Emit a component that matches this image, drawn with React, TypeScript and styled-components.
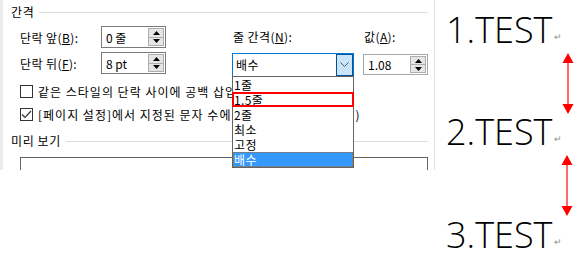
import styled, { createGlobalStyle } from "styled-components";

const GlobalStyle = createGlobalStyle`
  body {
    margin: 0;
    background: #ffffff;
  }
  * {
    box-sizing: border-box;
  }
`;

const Page = styled.div`
  display: flex;
  align-items: flex-start;
  width: 583px;
  height: 274px;
  overflow: hidden;
  background: #ffffff;
`;

const Dialog = styled.div`
  width: 435px;
  height: 170px;
  flex-shrink: 0;
  overflow: hidden;
  padding: 4px 6px 0 8px;
  background: #ffffff;
  border-left: 3px solid #ececec;
  border-right: 1px solid #e4e4e4;
  font-family: "Noto Sans CJK KR", "Noto Sans", sans-serif;
  font-size: 12px;
  color: #000000;
`;

const SectionHead = styled.div<{ $top?: number }>`
  display: flex;
  align-items: center;
  gap: 5px;
  height: 16px;
  margin-top: ${(p) => p.$top ?? 0}px;
  line-height: 16px;
  letter-spacing: 0.6px;
  &::after {
    content: "";
    flex: 1;
    height: 1px;
    background: #dcdcdc;
  }
`;

const Fields = styled.div`
  display: flex;
  align-items: flex-start;
  margin: 6px 0 0 9px;
`;

const LeftGroup = styled.div`
  display: flex;
  flex-direction: column;
  gap: 4px;
  width: 146px;
`;

const FieldRow = styled.div`
  display: flex;
  align-items: center;
  height: 22px;
`;

const Label = styled.span`
  width: 81px;
  white-space: nowrap;
  letter-spacing: 0.4px;
  u {
    text-decoration: underline;
    text-underline-offset: 1px;
  }
`;

const StackGroup = styled.div<{ $left: number; $gap: number; $raised?: boolean }>`
  position: relative;
  z-index: ${(p) => (p.$raised ? 5 : "auto")};
  display: flex;
  flex-direction: column;
  gap: ${(p) => p.$gap}px;
  margin-left: ${(p) => p.$left}px;
`;

const TopLabel = styled.div`
  height: 22px;
  line-height: 22px;
  padding-left: 1px;
  white-space: nowrap;
  letter-spacing: 0.4px;
  u {
    text-decoration: underline;
    text-underline-offset: 1px;
  }
`;

const SpinBox = styled.div<{ $border: string; $height: number }>`
  display: flex;
  align-items: center;
  justify-content: space-between;
  width: 65px;
  height: ${(p) => p.$height}px;
  padding: 1px 1px 1px 4px;
  border: 1px solid ${(p) => p.$border};
  background: #ffffff;
`;

const SpinValue = styled.span`
  font-family: "Noto Sans CJK KR", "Noto Sans", sans-serif;
  font-size: 12px;
`;

const Spinner = styled.div`
  display: flex;
  flex-direction: column;
  width: 16px;
  height: 100%;
`;

const SpinButton = styled.div`
  flex: 1;
  display: flex;
  align-items: center;
  justify-content: center;
  background: #e5e5e5;
  border: 1px solid #adadad;
  & + & {
    border-top: none;
  }
`;

const Combo = styled.div`
  position: relative;
  display: flex;
  align-items: stretch;
  width: 122px;
  height: 24px;
  border: 1px solid #0078d7;
  background: #ffffff;
`;

const ComboText = styled.span`
  flex: 1;
  padding-left: 3px;
  line-height: 22px;
  letter-spacing: 0.4px;
`;

const ComboButton = styled.div`
  display: flex;
  align-items: center;
  justify-content: center;
  width: 17px;
  background: #cce4f7;
  border: 1px solid #005499;
`;

const DropList = styled.div`
  position: absolute;
  top: 22px;
  left: -1px;
  width: 122px;
  border: 1px solid #646464;
  background: #ffffff;
  z-index: 6;
`;

const DropItem = styled.div<{ $selected?: boolean; $marked?: boolean }>`
  position: relative;
  height: 15px;
  line-height: 15px;
  padding-left: 1px;
  letter-spacing: 0.4px;
  background: ${(p) => (p.$selected ? "#3399ff" : "#ffffff")};
  color: ${(p) => (p.$selected ? "#ffffff" : "#000000")};
  outline: ${(p) => (p.$selected ? "1px dotted #b06a20" : "none")};
  outline-offset: -1px;
  &::after {
    content: "";
    display: ${(p) => (p.$marked ? "block" : "none")};
    position: absolute;
    inset: 0 -1px 0 -1px;
    border: 2px solid #ff0000;
  }
`;

const CheckRow = styled.div<{ $top: number }>`
  display: flex;
  align-items: center;
  gap: 5px;
  height: 16px;
  margin: ${(p) => p.$top}px 0 0 9px;
  white-space: nowrap;
  letter-spacing: 1px;
`;

const CheckBox = styled.span`
  display: flex;
  align-items: center;
  justify-content: center;
  width: 13px;
  height: 13px;
  flex-shrink: 0;
  border: 1px solid #333333;
  background: #ffffff;
`;

const Preview = styled.div`
  height: 40px;
  margin: 8px 0 0 9px;
  padding: 10px 0 0 31px;
  border: 1px solid #646464;
  font-size: 7px;
  letter-spacing: 0.5px;
  color: #c8c8c8;
  white-space: nowrap;
  overflow: hidden;
`;

const Document = styled.div`
  position: relative;
  flex: 1;
  height: 274px;
  padding: 4.5px 0 0 11px;
  font-family: "Open Sans", "Noto Sans", sans-serif;
  font-weight: 300;
  color: #000000;
`;

const Para = styled.div`
  height: 49px;
  margin-bottom: 53.5px;
  font-size: 36px;
  line-height: 49px;
  white-space: nowrap;
`;

const Mark = styled.span`
  margin-left: 2px;
  font-family: "DejaVu Sans", sans-serif;
  font-size: 9px;
  color: #8c8c8c;
  vertical-align: 3px;
`;

const Arrow = styled.svg<{ $top: number; $left: number }>`
  position: absolute;
  top: ${(p) => p.$top}px;
  left: ${(p) => p.$left}px;
`;

function SpinArrows() {
  return (
    <Spinner>
      <SpinButton>
        <svg width="7" height="4" viewBox="0 0 7 4">
          <polygon points="0,4 7,4 3.5,0" fill="#000" />
        </svg>
      </SpinButton>
      <SpinButton>
        <svg width="7" height="4" viewBox="0 0 7 4">
          <polygon points="0,0 7,0 3.5,4" fill="#000" />
        </svg>
      </SpinButton>
    </Spinner>
  );
}

function RedArrow({ top, left }: { top: number; left: number }) {
  return (
    <Arrow $top={top} $left={left} width="12" height="61" viewBox="0 0 12 61">
      <line x1="6" y1="8" x2="6" y2="53" stroke="#ff6b6b" strokeWidth="2" />
      <polygon points="6,0 11.5,10 0.5,10" fill="#ff0000" />
      <polygon points="6,61 11.5,51 0.5,51" fill="#ff0000" />
    </Arrow>
  );
}

const options = ["1줄", "1.5줄", "2줄", "최소", "고정", "배수"];

export default function App() {
  return (
    <>
      <GlobalStyle />
      <Page>
        <Dialog>
          <SectionHead>간격</SectionHead>
          <Fields>
            <LeftGroup>
              <FieldRow>
                <Label>
                  단락 앞(<u>B</u>):
                </Label>
                <SpinBox $border="#7a7a7a" $height={22}>
                  <SpinValue>0 줄</SpinValue>
                  <SpinArrows />
                </SpinBox>
              </FieldRow>
              <FieldRow>
                <Label>
                  단락 뒤(<u>F</u>):
                </Label>
                <SpinBox $border="#7a7a7a" $height={22}>
                  <SpinValue>8 pt</SpinValue>
                  <SpinArrows />
                </SpinBox>
              </FieldRow>
            </LeftGroup>
            <StackGroup $left={66} $gap={5} $raised>
              <TopLabel>
                줄 간격(<u>N</u>):
              </TopLabel>
              <Combo>
                <ComboText>배수</ComboText>
                <ComboButton>
                  <svg width="9" height="6" viewBox="0 0 9 6">
                    <polyline
                      points="0.5,0.5 4.5,4.5 8.5,0.5"
                      fill="none"
                      stroke="#4a5a6a"
                      strokeWidth="1"
                    />
                  </svg>
                </ComboButton>
                <DropList>
                  {options.map((o) => (
                    <DropItem
                      key={o}
                      $marked={o === "1.5줄"}
                      $selected={o === "배수"}
                    >
                      {o}
                    </DropItem>
                  ))}
                </DropList>
              </Combo>
            </StackGroup>
            <StackGroup $left={9} $gap={6}>
              <TopLabel>
                값(<u>A</u>):
              </TopLabel>
              <SpinBox $border="#a8a8a8" $height={21}>
                <SpinValue>1.08</SpinValue>
                <SpinArrows />
              </SpinBox>
            </StackGroup>
          </Fields>
          <CheckRow $top={6}>
            <CheckBox />
            같은 스타일의 단락 사이에 공백 삽입 안 함(C)
          </CheckRow>
          <CheckRow $top={7}>
            <CheckBox>
              <svg width="11" height="9" viewBox="0 0 11 9">
                <polyline
                  points="1,4.5 4,7.5 10,1"
                  fill="none"
                  stroke="#333"
                  strokeWidth="1.2"
                />
              </svg>
            </CheckBox>
            [페이지 설정]에서 지정된 문자 수에 맞추어 줄간격 조정(W)
          </CheckRow>
          <SectionHead $top={11}>미리 보기</SectionHead>
          <Preview>
            이전 단락 이전 단락 이전 단락 이전 단락 이전 단락 이전 단락 이전
            단락 이전 단락 이전 단락 이전 단락 이전
          </Preview>
        </Dialog>
        <Document>
          <Para>
            1.TEST<Mark>↵</Mark>
          </Para>
          <Para>
            2.TEST<Mark>↵</Mark>
          </Para>
          <Para>
            3.TEST<Mark>↵</Mark>
          </Para>
          <RedArrow top={53} left={127} />
          <RedArrow top={155} left={126} />
        </Document>
      </Page>
    </>
  );
}
